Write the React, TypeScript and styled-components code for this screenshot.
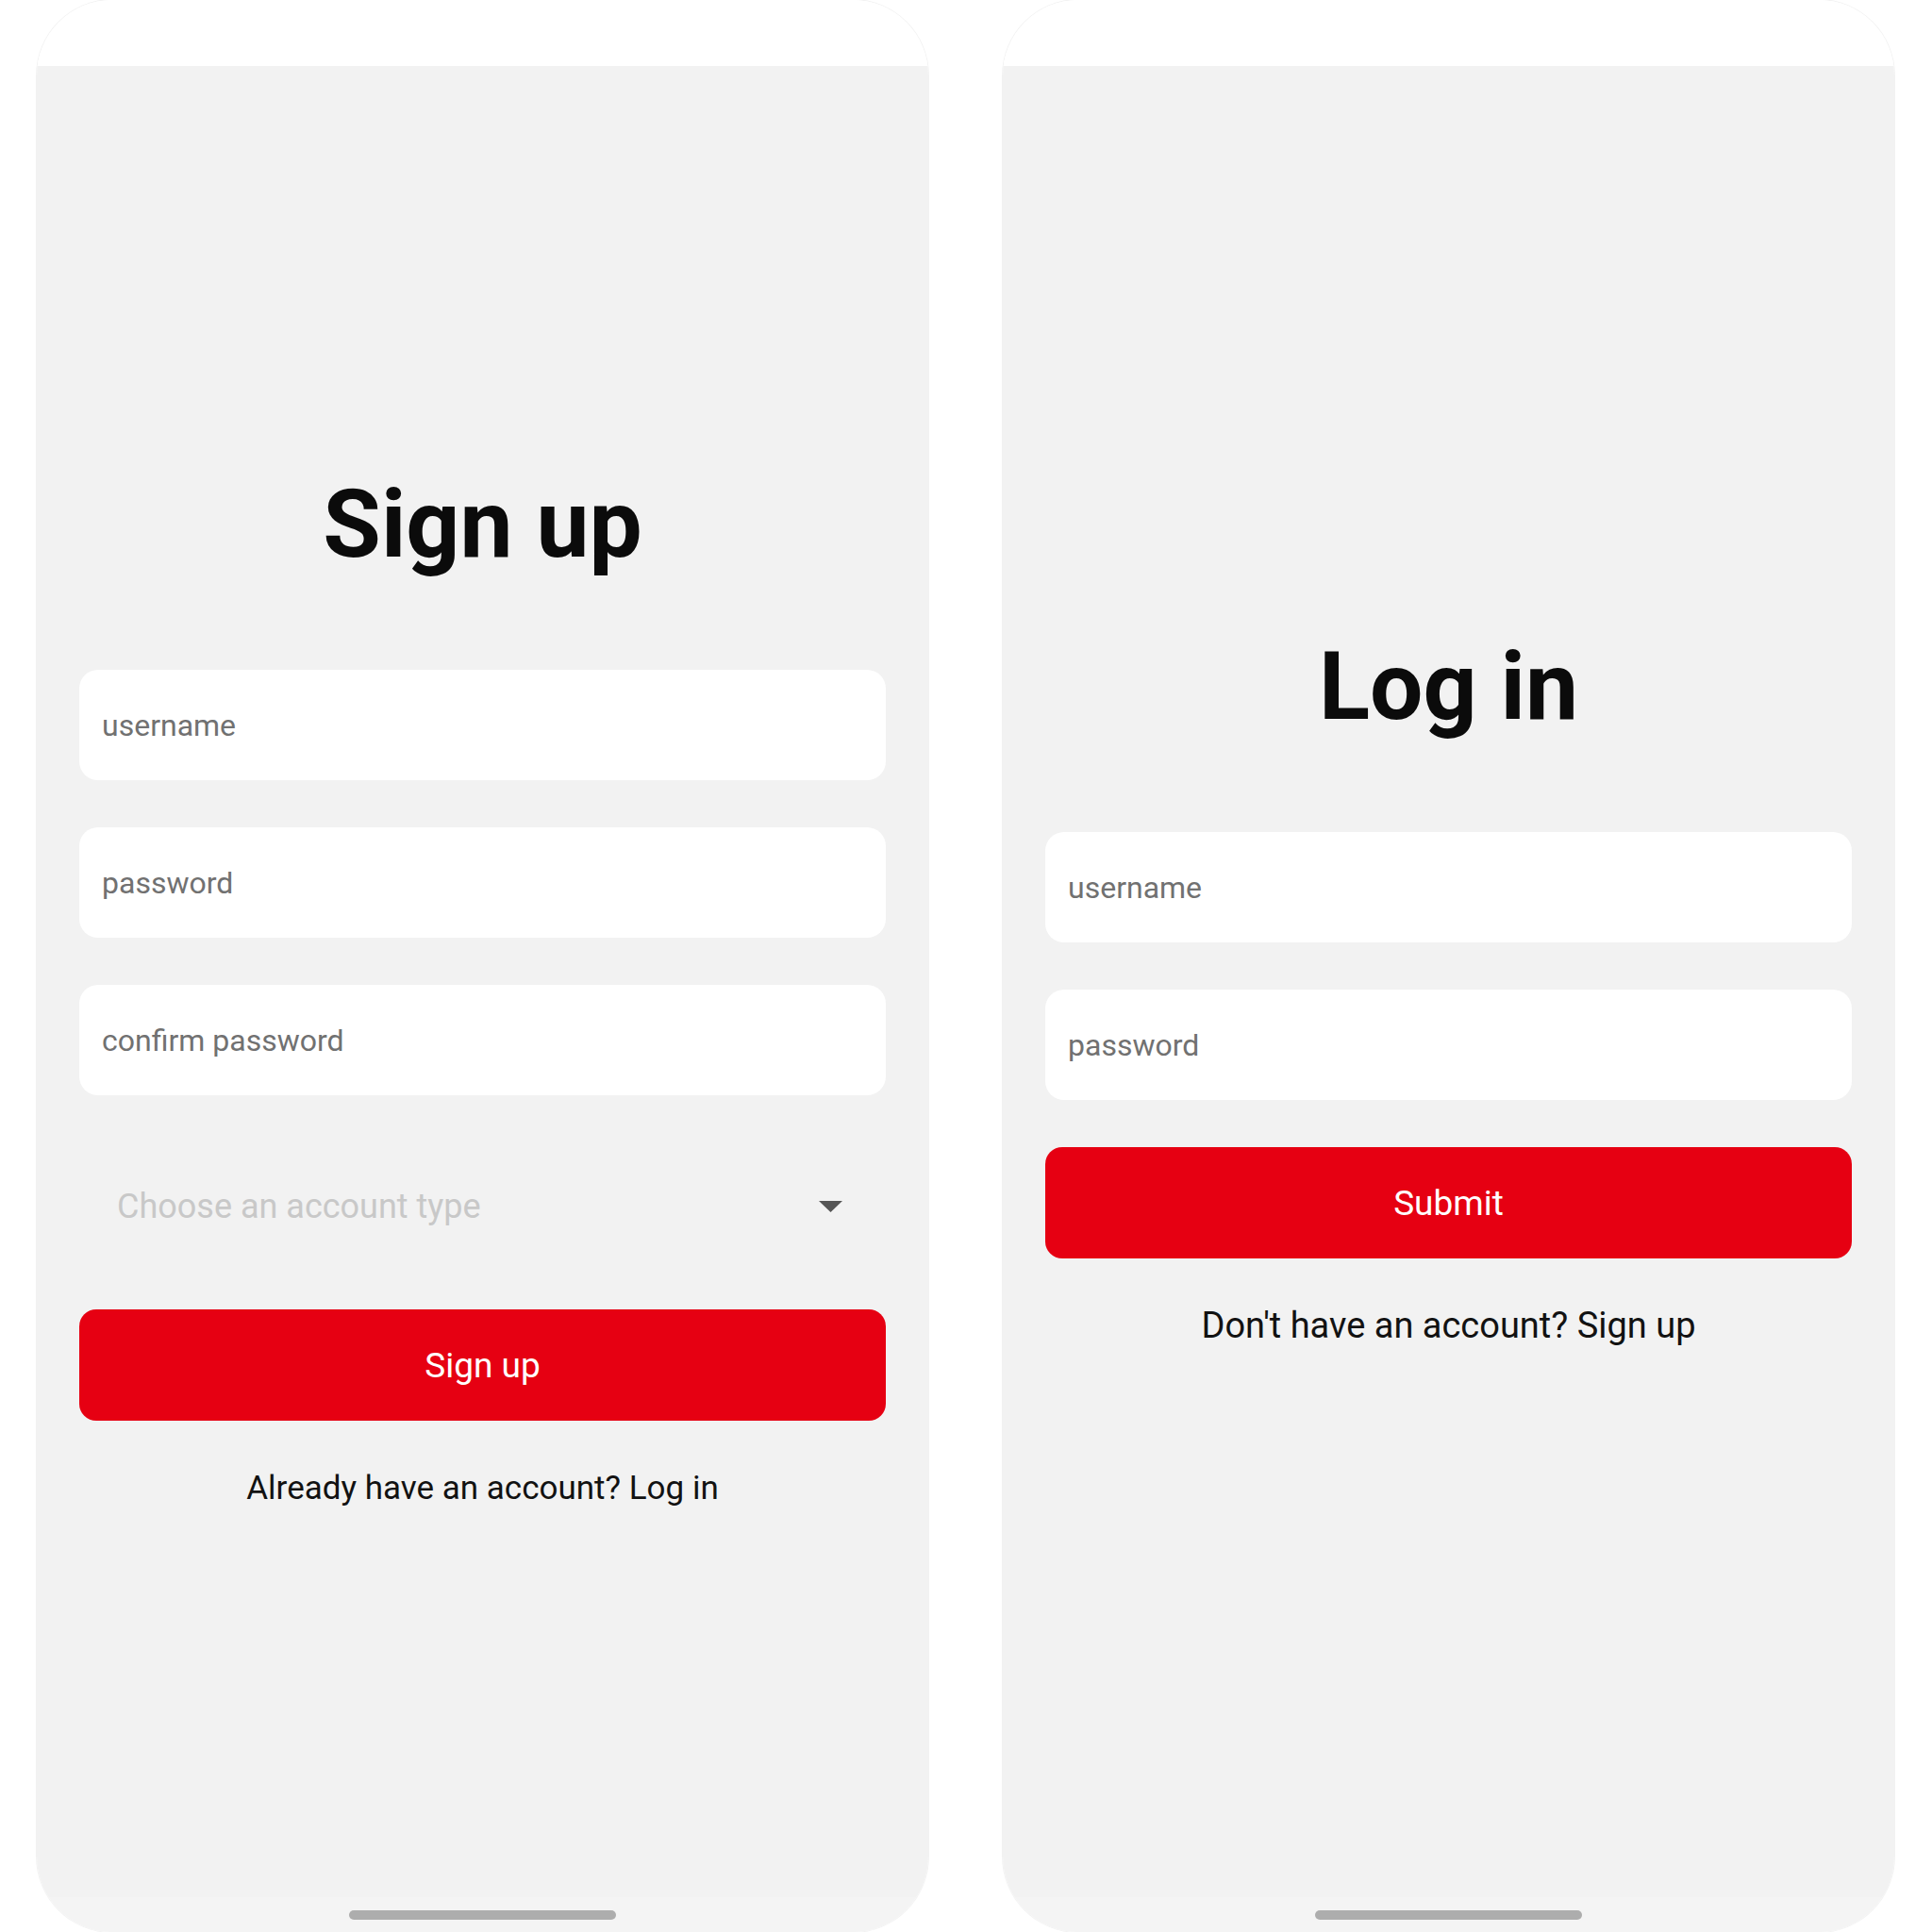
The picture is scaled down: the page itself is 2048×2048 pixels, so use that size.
import React from "react";
import styled, { createGlobalStyle } from "styled-components";

const GlobalStyle = createGlobalStyle`
  html, body {
    margin: 0;
    padding: 0;
    background: #ffffff;
  }
  body {
    font-family: Roboto, "Liberation Sans", Arial, sans-serif;
  }
  * {
    box-sizing: border-box;
  }
`;

const Page = styled.div`
  display: flex;
  gap: 79px;
  padding-left: 39px;
  width: 2048px;
  height: 2048px;
`;

const Phone = styled.div`
  width: 945px;
  height: 2048px;
  border-radius: 80px;
  overflow: hidden;
  display: flex;
  flex-direction: column;
  box-shadow: 0 0 0 1px rgba(0, 0, 0, 0.05);
`;

const StatusBar = styled.div`
  height: 70px;
  flex-shrink: 0;
  background: #ffffff;
`;

const Screen = styled.div`
  flex: 1;
  background: #f2f2f2;
  display: flex;
  flex-direction: column;
  justify-content: center;
  padding: 14px 45px 0;
`;

const HomeBar = styled.div`
  height: 37px;
  flex-shrink: 0;
  background: #f4f4f4;
  display: flex;
  justify-content: center;
  padding-top: 14px;
`;

const HomeIndicator = styled.div`
  width: 283px;
  height: 10px;
  border-radius: 5px;
  background: #adadad;
`;

const Form = styled.div`
  display: flex;
  flex-direction: column;
  gap: 50px;
`;

const Title = styled.h1`
  margin: 0 0 44px;
  font-size: 100px;
  line-height: 120px;
  font-weight: 700;
  text-align: center;
  color: #0b0b0b;
`;

const Field = styled.input`
  height: 117px;
  width: 100%;
  border: none;
  outline: none;
  border-radius: 20px;
  background: #ffffff;
  padding: 0 24px;
  font-family: inherit;
  font-size: 32px;
  color: #222;

  &::placeholder {
    color: #717171;
  }
`;

const Select = styled.div`
  height: 127px;
  display: flex;
  align-items: center;
  justify-content: space-between;
  padding: 8px 46px 0 40px;
  font-size: 36px;
  color: #c8c8c8;
`;

const Caret = styled.svg`
  width: 25px;
  height: 12px;
  fill: #555555;
`;

const PrimaryButton = styled.button`
  height: 118px;
  border: none;
  border-radius: 18px;
  background: #e60012;
  color: #ffffff;
  font-family: inherit;
  font-size: 37px;
  cursor: pointer;
`;

const SwitchLink = styled.div<{ $size: number }>`
  text-align: center;
  font-size: ${(p) => p.$size}px;
  line-height: 43px;
  color: #121212;
`;

type ScreenProps = {
  title: string;
  fields: string[];
  withSelect?: boolean;
  action: string;
  link: string;
  linkSize: number;
};

function AuthScreen({ title, fields, withSelect, action, link, linkSize }: ScreenProps) {
  return (
    <Phone>
      <StatusBar />
      <Screen>
        <Form>
          <Title>{title}</Title>
          {fields.map((f) => (
            <Field key={f} placeholder={f} type="text" readOnly />
          ))}
          {withSelect && (
            <Select>
              <span>Choose an account type</span>
              <Caret viewBox="0 0 25 12">
                <polygon points="0,0 25,0 12.5,12" />
              </Caret>
            </Select>
          )}
          <PrimaryButton>{action}</PrimaryButton>
          <SwitchLink $size={linkSize}>{link}</SwitchLink>
        </Form>
      </Screen>
      <HomeBar>
        <HomeIndicator />
      </HomeBar>
    </Phone>
  );
}

export default function App() {
  return (
    <>
      <GlobalStyle />
      <Page>
        <AuthScreen
          title="Sign up"
          fields={["username", "password", "confirm password"]}
          withSelect
          action="Sign up"
          link="Already have an account? Log in"
          linkSize={35}
        />
        <AuthScreen
          title="Log in"
          fields={["username", "password"]}
          action="Submit"
          link="Don't have an account? Sign up"
          linkSize={38}
        />
      </Page>
    </>
  );
}
